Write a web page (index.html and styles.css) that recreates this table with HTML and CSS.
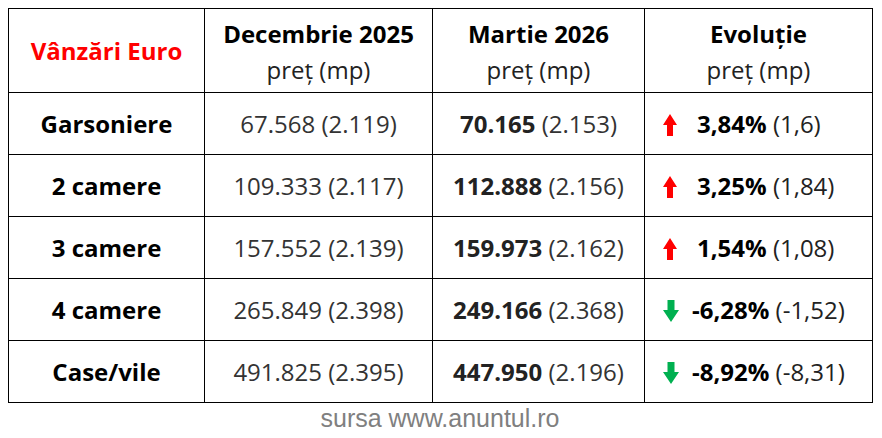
FILE: index.html
```html
<!DOCTYPE html>
<html lang="ro">
<head>
<meta charset="utf-8">
<link rel="stylesheet" href="styles.css">
</head>
<body>
<table class="stats">
  <colgroup>
    <col class="c1"><col class="c2"><col class="c3"><col class="c4">
  </colgroup>
  <thead>
    <tr>
      <th class="title">Vânzări Euro</th>
      <th><span class="h">Decembrie 2025</span><span class="sub">preț (mp)</span></th>
      <th><span class="h">Martie 2026</span><span class="sub">preț (mp)</span></th>
      <th><span class="h">Evoluție</span><span class="sub">preț (mp)</span></th>
    </tr>
  </thead>
  <tbody>
    <tr>
      <td class="label">Garsoniere</td>
      <td class="val">67.568 (2.119)</td>
      <td class="val"><b>70.165</b> (2.153)</td>
      <td class="evo"><svg class="arrow up" viewBox="0 0 14 22"><path d="M7 0 L14 11 L10 11 L10 22 L4 22 L4 11 L0 11 Z"/></svg><b>3,84%</b> (1,6)</td>
    </tr>
    <tr>
      <td class="label">2 camere</td>
      <td class="val">109.333 (2.117)</td>
      <td class="val"><b>112.888</b> (2.156)</td>
      <td class="evo"><svg class="arrow up" viewBox="0 0 14 22"><path d="M7 0 L14 11 L10 11 L10 22 L4 22 L4 11 L0 11 Z"/></svg><b>3,25%</b> (1,84)</td>
    </tr>
    <tr>
      <td class="label">3 camere</td>
      <td class="val">157.552 (2.139)</td>
      <td class="val"><b>159.973</b> (2.162)</td>
      <td class="evo"><svg class="arrow up" viewBox="0 0 14 22"><path d="M7 0 L14 11 L10 11 L10 22 L4 22 L4 11 L0 11 Z"/></svg><b>1,54%</b> (1,08)</td>
    </tr>
    <tr>
      <td class="label">4 camere</td>
      <td class="val">265.849 (2.398)</td>
      <td class="val"><b>249.166</b> (2.368)</td>
      <td class="evo"><svg class="arrow down" viewBox="0 0 16 22"><path d="M4.5 0 L11.5 0 L11.5 10 L16 10 L8 22 L0 10 L4.5 10 Z"/></svg><b>-6,28%</b> (-1,52)</td>
    </tr>
    <tr>
      <td class="label">Case/vile</td>
      <td class="val">491.825 (2.395)</td>
      <td class="val"><b>447.950</b> (2.196)</td>
      <td class="evo"><svg class="arrow down" viewBox="0 0 16 22"><path d="M4.5 0 L11.5 0 L11.5 10 L16 10 L8 22 L0 10 L4.5 10 Z"/></svg><b>-8,92%</b> (-8,31)</td>
    </tr>
  </tbody>
</table>
<p class="source">sursa www.anuntul.ro</p>
</body>
</html>
```
FILE: styles.css
```css
html, body {
  margin: 0;
  padding: 0;
  background: #fff;
}
body {
  padding: 8px;
  font-family: "Open Sans", "Noto Sans", sans-serif;
}
.stats {
  border-collapse: collapse;
  width: 864px;
  table-layout: fixed;
}
.c1 { width: 196px; }
.c2 { width: 228px; }
.c3 { width: 212px; }
.c4 { width: 228px; }
.stats th, .stats td {
  border: 1px solid #000;
  text-align: center;
  vertical-align: middle;
  padding: 0;
  white-space: nowrap;
}
.stats thead tr { height: 84px; }
.stats tbody tr { height: 62px; }
.stats th {
  font-weight: 700;
  font-size: 24px;
  color: #000;
  line-height: 36px;
  padding-top: 3px;
}
.stats th .h { display: block; }
.stats th .sub {
  display: block;
  font-weight: 400;
  color: #222;
}
.stats th.title {
  color: #ff0000;
  padding-top: 0;
}
.label {
  font-weight: 700;
  font-size: 24px;
  color: #000;
}
.val {
  font-size: 24px;
  color: #333;
}
.val b { color: #222; }
.stats td.evo {
  font-size: 24px;
  color: #222;
  text-align: left;
  padding-left: 18px;
}
.evo b { color: #000; }
.arrow {
  display: inline-block;
  vertical-align: middle;
  position: relative;
  top: -2px;
}
.arrow.up { width: 14px; height: 22px; fill: #ff0000; margin-right: 20px; }
.arrow.down { width: 16px; height: 22px; fill: #00b050; margin-right: 13px; }
.source {
  margin: 1px 0 0;
  width: 864px;
  text-align: center;
  font-family: "Liberation Sans", Arial, sans-serif;
  font-size: 25px;
  line-height: 28px;
  color: #808080;
}
```
